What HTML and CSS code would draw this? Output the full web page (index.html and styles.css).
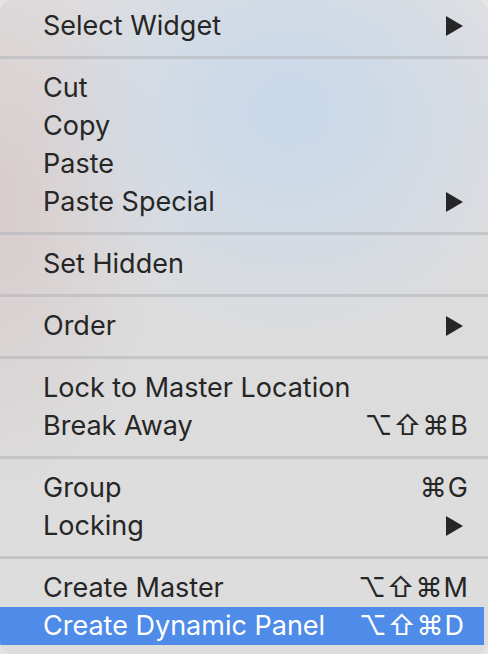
FILE: index.html
```html
<!DOCTYPE html>
<html>
<head>
<meta charset="utf-8">
<link rel="stylesheet" href="styles.css">
</head>
<body>
<div class="menu">
  <div class="group">
    <div class="item"><span class="label">Select Widget</span><span class="arrow"></span></div>
  </div>
  <div class="sep"></div>
  <div class="group">
    <div class="item"><span class="label">Cut</span></div>
    <div class="item"><span class="label">Copy</span></div>
    <div class="item"><span class="label">Paste</span></div>
    <div class="item"><span class="label">Paste Special</span><span class="arrow"></span></div>
  </div>
  <div class="sep"></div>
  <div class="group">
    <div class="item"><span class="label">Set Hidden</span></div>
  </div>
  <div class="sep"></div>
  <div class="group">
    <div class="item"><span class="label">Order</span><span class="arrow"></span></div>
  </div>
  <div class="sep"></div>
  <div class="group">
    <div class="item"><span class="label">Lock to Master Location</span></div>
    <div class="item"><span class="label">Break Away</span><span class="keys">⌥⇧⌘B</span></div>
  </div>
  <div class="sep"></div>
  <div class="group">
    <div class="item"><span class="label">Group</span><span class="keys">⌘G</span></div>
    <div class="item"><span class="label">Locking</span><span class="arrow"></span></div>
  </div>
  <div class="sep"></div>
  <div class="group">
    <div class="item"><span class="label">Create Master</span><span class="keys">⌥⇧⌘M</span></div>
    <div class="item active"><span class="label">Create Dynamic Panel</span><span class="keys">⌥⇧⌘D</span></div>
  </div>
</div>
</body>
</html>
```
FILE: styles.css
```css
html, body {
  margin: 0;
  padding: 0;
}
body {
  width: 488px;
  height: 654px;
  background: #e6e4e4;
  overflow: hidden;
}
.menu {
  width: 488px;
  height: 654px;
  box-sizing: border-box;
  border-radius: 12px;
  overflow: hidden;
  padding: 7px 0 9px;
  display: flex;
  flex-direction: column;
  background:
    radial-gradient(ellipse 260px 230px at 290px 110px, rgba(196, 215, 236, 0.9), rgba(196, 215, 236, 0) 100%),
    radial-gradient(ellipse 160px 300px at 0px 200px, rgba(214, 200, 200, 0.8), rgba(214, 200, 200, 0) 100%),
    linear-gradient(180deg, #e0dfe0 0%, #dcdcdd 50%, #dedddd 100%);
  font-family: Inter, "Noto Sans", sans-serif;
  color: #262626;
}
.group {
  display: flex;
  flex-direction: column;
}
.item {
  height: 38px;
  display: flex;
  align-items: center;
  padding: 0 20px 0 43px;
  font-size: 27px;
  line-height: 38px;
}
.label {
  flex: 1;
  white-space: nowrap;
}
.arrow {
  width: 0;
  height: 0;
  border-top: 10px solid transparent;
  border-bottom: 10px solid transparent;
  border-left: 17px solid #262626;
  margin-right: 5px;
}
.keys {
  white-space: nowrap;
  letter-spacing: 1px;
  margin-right: -1px;
}
.sep {
  height: 3px;
  margin: 11px 0 10px;
  background: rgba(180, 182, 186, 0.6);
}
.active {
  background: #4f8be8;
  color: #ffffff;
  margin-right: 4px;
}
.active .arrow {
  border-left-color: #ffffff;
}
```
